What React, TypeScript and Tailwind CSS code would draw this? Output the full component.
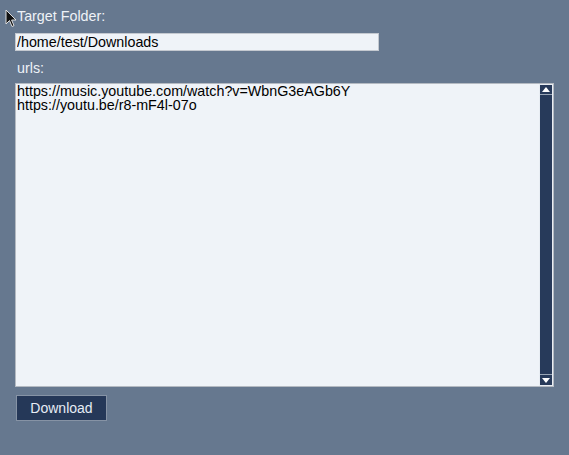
import React, { useState } from 'react';

const font = { fontFamily: '"Liberation Sans", Arial, sans-serif' };

const App: React.FC = () => {
  const [folder, setFolder] = useState('/home/test/Downloads');
  const [urls, setUrls] = useState(
    'https://music.youtube.com/watch?v=WbnG3eAGb6Y\nhttps://youtu.be/r8-mF4l-07o'
  );

  return (
    <div className="relative w-[569px] h-[455px] bg-[#66788f] text-[14.3px]" style={font}>
      {/* mouse pointer */}
      <svg className="absolute left-[5px] top-[9px]" width="12" height="19" viewBox="0 0 12 19">
        <path d="M1 1 L1 15 L4.5 11.5 L7 17.5 L9 16.6 L6.6 11 L11 11 Z" fill="#111" stroke="#ddd" strokeWidth="1" />
      </svg>

      <div className="flex flex-col pl-[15px] pt-[8px]">
        {/* Target folder */}
        <label className="ml-[2px] leading-[16px] text-[#eef2f7]">Target Folder:</label>
        <input
          value={folder}
          onChange={e => setFolder(e.target.value)}
          className="mt-[9px] w-[364px] h-[18px] px-[1px] text-[14.3px] leading-[16px] bg-[#eff3f8] border border-[#c4c9d0] text-black outline-none"
          style={font}
        />

        {/* urls */}
        <label className="ml-[2px] mt-[9px] leading-[16px] text-[#eef2f7]">urls:</label>
        <div className="mt-[7px] flex w-[539px] h-[304px] border border-[#b4bac2] bg-[#eff3f8]">
          <textarea
            value={urls}
            onChange={e => setUrls(e.target.value)}
            className="flex-1 h-full resize-none overflow-hidden px-[1px] pt-[0px] text-[14.3px] leading-[14px] bg-transparent text-black outline-none"
            style={font}
          />
          <div className="flex flex-col w-[14px] h-full bg-[#273a5a] border border-[#e8edf3]">
            <div className="flex items-center justify-center h-[10px] border-b border-[#9aa6b6]">
              <svg width="8" height="5" viewBox="0 0 8 5">
                <path d="M0 5 L4 0 L8 5 Z" fill="#fff" />
              </svg>
            </div>
            <div className="flex-1" />
            <div className="flex items-center justify-center h-[11px] border-t border-[#9aa6b6]">
              <svg width="8" height="5" viewBox="0 0 8 5">
                <path d="M0 0 L4 5 L8 0 Z" fill="#fff" />
              </svg>
            </div>
          </div>
        </div>

        {/* button */}
        <div className="flex mt-[8px] pl-[1px]">
          <button
            className="w-[91px] h-[26px] bg-[#253858] border border-[#8693a5] text-[14px] text-[#e6ecf5] leading-[16px]"
            style={font}
          >
            Download
          </button>
        </div>
      </div>
    </div>
  );
};

export default App;
